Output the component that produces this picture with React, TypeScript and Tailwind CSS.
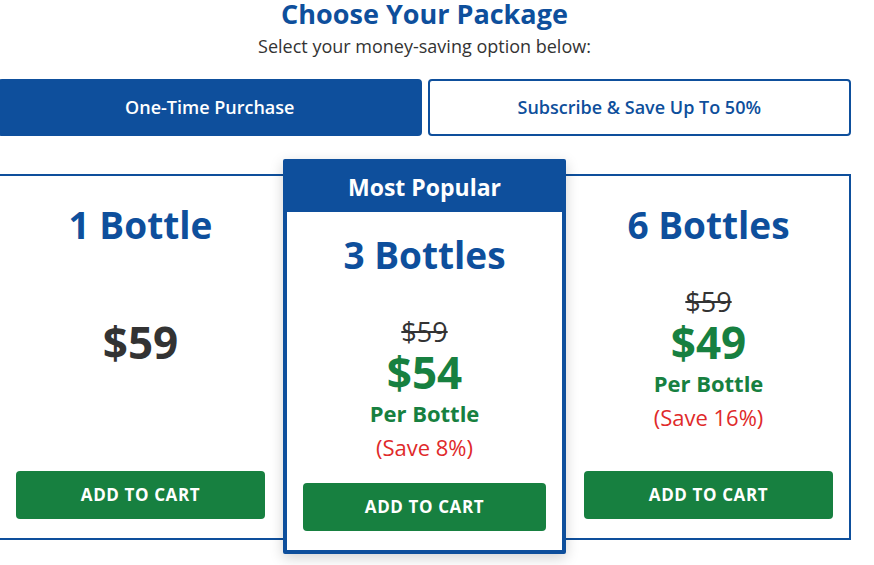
import React, { useState } from 'react';

interface Pack {
  title: string;
  oldPrice?: string;
  price: string;
  perBottle: boolean;
  save?: string;
  popular?: boolean;
  pad: string;
}

const packs: Pack[] = [
  { title: '1 Bottle', price: '$59', perBottle: false, pad: 'pl-4 pr-[18px]' },
  { title: '3 Bottles', oldPrice: '$59', price: '$54', perBottle: true, save: '(Save 8%)', popular: true, pad: 'px-4' },
  { title: '6 Bottles', oldPrice: '$59', price: '$49', perBottle: true, save: '(Save 16%)', pad: 'pl-[18px] pr-4' },
];

const PackCard: React.FC<{ pack: Pack }> = ({ pack }) => {
  const isDeal = !!pack.oldPrice;

  return (
    <div
      className={`flex flex-col bg-white ${
        pack.popular
          ? 'relative z-10 -mt-[17px] -mb-[16px] border-4 border-[#0e4f9c] rounded-[2px] shadow-[0_4px_14px_rgba(0,0,0,0.18)]'
          : ''
      }`}
    >
      {pack.popular && (
        <div className="h-[49px] flex items-center justify-center bg-[#0e4f9c] text-white text-[23px] font-bold">
          Most Popular
        </div>
      )}
      <div className={`flex flex-col flex-1 items-center pb-[19px] ${pack.pad} ${pack.popular ? 'pt-[21px]' : 'pt-[27px]'}`}>
        <h2 className="text-[37px] leading-[44px] font-bold text-[#0e4f9c]">{pack.title}</h2>
        <div className={`mt-[40px] text-[27px] leading-[30px] text-[#333] line-through ${isDeal ? '' : 'invisible'}`}>
          {pack.oldPrice ?? '$59'}
        </div>
        <div className={`text-[44px] leading-[51px] font-bold ${isDeal ? 'text-[#178040]' : 'text-[#333]'}`}>
          {pack.price}
        </div>
        {pack.perBottle && (
          <div className="text-[22px] leading-[30px] font-bold text-[#178040]">Per Bottle</div>
        )}
        {pack.save && <div className="mt-[3px] text-[22px] leading-[32px] text-[#e02a2a]">{pack.save}</div>}
        <button className="mt-auto w-full h-[48px] rounded-[4px] bg-[#178040] text-white text-[17px] font-bold tracking-[0.6px]">
          ADD TO CART
        </button>
      </div>
    </div>
  );
};

const App: React.FC = () => {
  const [mode, setMode] = useState<'once' | 'sub'>('once');

  return (
    <div className="min-h-screen bg-white overflow-hidden">
      <div className="w-[853px] -ml-[2px] font-['Open_Sans','Noto_Sans',sans-serif]">
        <h1 className="text-center text-[27px] leading-[28px] font-bold text-[#0e4f9c]">Choose Your Package</h1>
        <p className="mt-[6px] text-center text-[18px] leading-[24px] text-[#333]">
          Select your money-saving option below:
        </p>
        <div className="mt-[21px] grid grid-cols-2 gap-[6px]">
          <button
            onClick={() => setMode('once')}
            className={`h-[57px] rounded-[4px] text-[18px] font-semibold border-2 border-[#0e4f9c] ${
              mode === 'once' ? 'bg-[#0e4f9c] text-white' : 'bg-white text-[#0e4f9c]'
            }`}
          >
            One-Time Purchase
          </button>
          <button
            onClick={() => setMode('sub')}
            className={`h-[57px] rounded-[4px] text-[18px] font-semibold border-2 border-[#0e4f9c] ${
              mode === 'sub' ? 'bg-[#0e4f9c] text-white' : 'bg-white text-[#0e4f9c]'
            }`}
          >
            Subscribe &amp; Save Up To 50%
          </button>
        </div>
        <div className="mt-[38px] h-[366px] grid grid-cols-3 border-2 border-[#0e4f9c]">
          {packs.map((p) => (
            <PackCard key={p.title} pack={p} />
          ))}
        </div>
      </div>
    </div>
  );
};

export default App;
